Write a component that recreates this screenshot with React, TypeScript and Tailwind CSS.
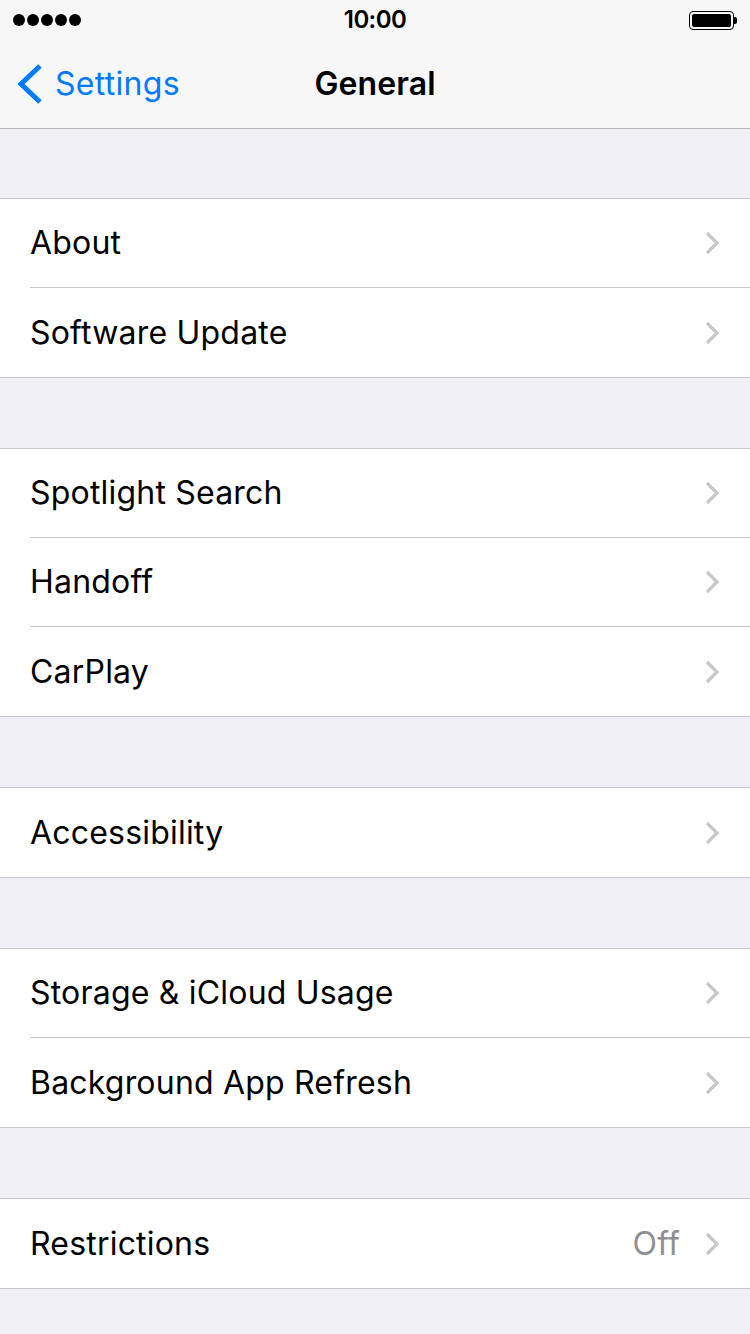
import React from "react";

const GROUPS: { label: string; value?: string }[][] = [
  [{ label: "About" }, { label: "Software Update" }],
  [{ label: "Spotlight Search" }, { label: "Handoff" }, { label: "CarPlay" }],
  [{ label: "Accessibility" }],
  [{ label: "Storage & iCloud Usage" }, { label: "Background App Refresh" }],
  [{ label: "Restrictions", value: "Off" }],
];

function Chevron() {
  return (
    <svg width="16" height="26" viewBox="0 0 16 26" className="flex-shrink-0">
      <path d="M3 3 L13 13 L3 23" fill="none" stroke="#c7c7cc" strokeWidth="3.2" />
    </svg>
  );
}

function StatusBar() {
  return (
    <div className="h-[40px] flex items-center justify-between px-[13px] relative">
      <div className="flex gap-[2px]">
        {[1, 2, 3, 4, 5].map(i => (
          <div key={i} className="w-[12px] h-[12px] rounded-full bg-black" />
        ))}
      </div>
      <div className="absolute left-0 right-0 text-center text-[24px] font-semibold text-black tracking-tight">10:00</div>
      <div className="flex items-center">
        <div className="w-[45px] h-[19px] rounded-[4px] border-[1.5px] border-black p-[2px]">
          <div className="w-full h-full bg-black rounded-[2px]" />
        </div>
        <div className="w-[3px] h-[7px] bg-black rounded-r-[2px]" />
      </div>
    </div>
  );
}

export default function App() {
  return (
    <div className="w-[750px] min-h-[1334px] bg-[#efeff4]" style={{ fontFamily: "Inter, 'Noto Sans', sans-serif" }}>
      {/* Header */}
      <div className="bg-[#f7f7f7] border-b border-[#b2b2b2]">
        <StatusBar />
        <div className="h-[88px] flex items-center relative">
          <div className="flex items-center pl-[16px] gap-[11px] text-[#007aff]">
            <svg width="28" height="42" viewBox="0 0 28 42">
              <path d="M24 3 L5 21 L24 39" fill="none" stroke="#007aff" strokeWidth="5" />
            </svg>
            <span className="text-[32px] tracking-[0.3px]">Settings</span>
          </div>
          <div className="absolute left-0 right-0 text-center text-[32px] font-semibold text-black pointer-events-none tracking-[0.1px]">General</div>
        </div>
      </div>

      {/* Groups */}
      <div className="flex flex-col gap-[70px] pt-[69px]">
        {GROUPS.map((group, gi) => (
          <div key={gi} className="bg-white border-y border-[#c8c7cc]">
            {group.map((row, ri) => (
              <div key={row.label} className="pl-[30px]">
                <div className={`h-[89px] flex items-center pr-[30px] ${ri < group.length - 1 ? "border-b border-[#c8c7cc]" : ""}`}>
                  <span className="flex-1 text-[32px] text-black tracking-[0.2px]">{row.label}</span>
                  {row.value && <span className="text-[32px] text-[#8e8e93] mr-[24px] tracking-[0.2px]">{row.value}</span>}
                  <Chevron />
                </div>
              </div>
            ))}
          </div>
        ))}
      </div>
    </div>
  );
}
